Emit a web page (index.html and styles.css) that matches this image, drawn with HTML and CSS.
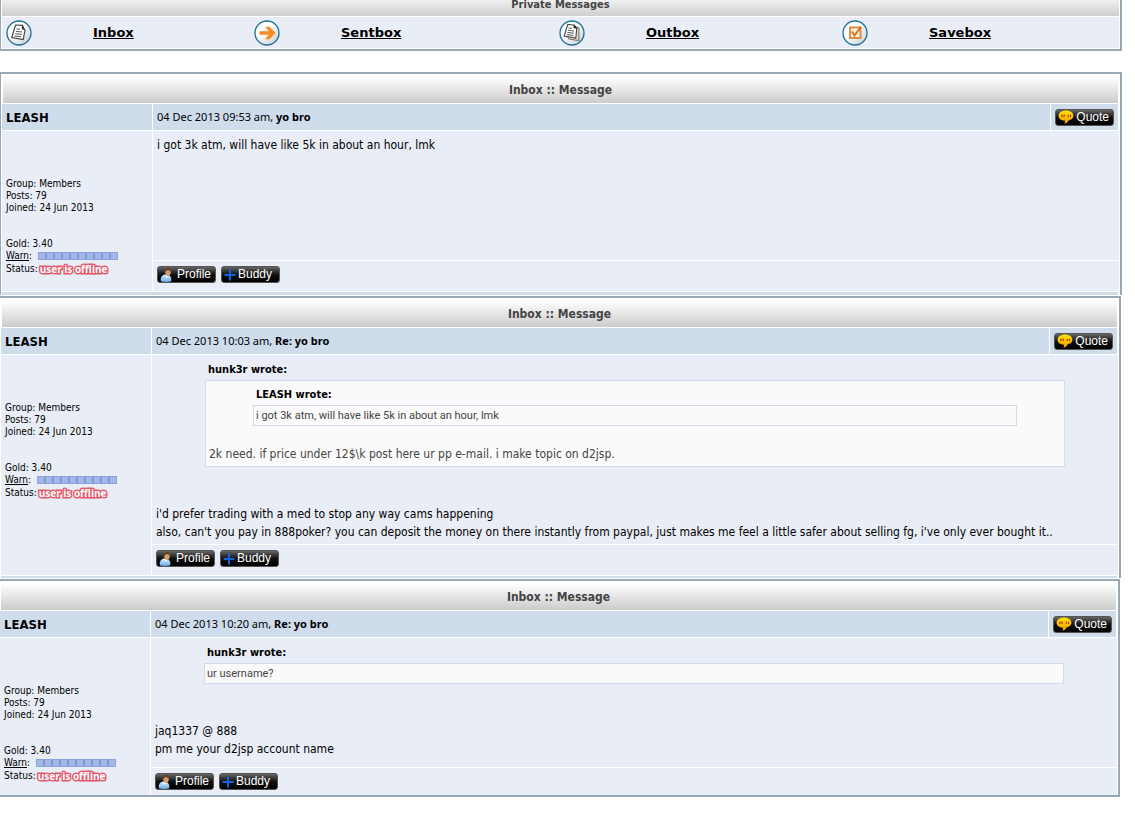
FILE: index.html
```
<!DOCTYPE html>
<html lang="en">
  <head>
    <meta charset="UTF-8" />
    <meta name="viewport" content="width=device-width, initial-scale=1.0" />
    <title>Private Messages</title>
    <link rel="stylesheet" href="styles.css">
  </head>
  <body>
    <!-- Shared icons -->
    <svg class="sprite" aria-hidden="true">
      <defs>
        <linearGradient id="disc" x1="0" y1="0" x2="1" y2="1">
          <stop offset="0.4" stop-color="#ffffff" />
          <stop offset="1" stop-color="#c4c8cc" />
        </linearGradient>
        <linearGradient id="bubble" x1="0" y1="0" x2="0" y2="1">
          <stop offset="0" stop-color="#ffe400" />
          <stop offset="1" stop-color="#f59a00" />
        </linearGradient>
        <linearGradient id="shirt" x1="0" y1="0" x2="0" y2="1">
          <stop offset="0" stop-color="#d4ecff" />
          <stop offset="1" stop-color="#69aee8" />
        </linearGradient>
      </defs>
      <symbol id="icon-inbox" viewBox="0 0 26 26">
        <circle cx="13" cy="13" r="12" fill="url(#disc)" stroke="#1f7196" stroke-width="1.3" />
        <path d="M9.5 5 L16.5 5.3 L18 9 L19 10 L17.2 19.5 L5.8 17.5 Z" fill="#fff" stroke="#444" stroke-width="1.2" />
        <path d="M16 5 L15.8 9.3 L19 9.8 Z" fill="#333" />
        <path d="M10.5 9 L14 9.3 M10 11.4 L16 12 M9.2 13.7 L15.7 14.4 M8.4 16 L15.2 16.8" stroke="#555" stroke-width="1" />
      </symbol>
      <symbol id="icon-sent" viewBox="0 0 26 26">
        <circle cx="13" cy="13" r="12" fill="url(#disc)" stroke="#1f7196" stroke-width="1.3" />
        <path d="M5.5 11.2 H15 L11 6.8 H15.5 L21.5 13 L15.5 19.2 H11 L15 14.8 H5.5 Z" fill="#f78b1f" />
      </symbol>
      <symbol id="icon-outbox" viewBox="0 0 26 26">
        <circle cx="13" cy="13" r="12" fill="url(#disc)" stroke="#1f7196" stroke-width="1.3" />
        <path d="M18 7 L20 8.5 L19.8 20.5 L10 19 L9 17.5" fill="#e4dccb" stroke="#777" stroke-width="1.1" />
        <path d="M8.7 4.5 L15 5 L17.8 8 L16.8 18 L5.2 16 Z" fill="#fff" stroke="#444" stroke-width="1.1" />
        <path d="M14.8 4.6 L14.5 8.3 L18.2 8.6 Z" fill="#222" />
        <path d="M9.5 8 L13 8.4 M9 10.3 L15 11 M8.5 12.5 L14.8 13.2 M8 14.6 L14.5 15.4" stroke="#444" stroke-width="0.9" />
      </symbol>
      <symbol id="icon-save" viewBox="0 0 26 26">
        <circle cx="13" cy="13" r="12" fill="url(#disc)" stroke="#1f7196" stroke-width="1.3" />
        <rect x="8" y="7.5" width="10.5" height="10.5" fill="#fff4e2" stroke="#d98230" stroke-width="1.8" />
        <path d="M10 11.5 L12.5 15.5 L19 6.8" fill="none" stroke="#d5741b" stroke-width="2" />
      </symbol>
      <symbol id="icon-quote" viewBox="0 0 16 14">
        <path d="M8 0.5 C12.5 0.5 15.4 2.8 15.4 5.8 C15.4 8.4 13 10 10.4 10.4 C9.7 12.2 8.4 13.2 6.4 13.8 C7 12.5 7.2 11.5 7 10.8 C3 10.6 0.6 8.8 0.6 5.8 C0.6 2.8 3.5 0.5 8 0.5 Z" fill="url(#bubble)" />
        <path d="M3.8 7 V5.6 L4.6 4.8 M6 7 V5.6 L6.8 4.8 M10.4 4.8 V5.8 L9.8 6.8 M12.6 4.8 V5.8 L12 6.8" fill="none" stroke="#b34a00" stroke-width="1.3" />
      </symbol>
      <symbol id="icon-profile" viewBox="0 0 13 15">
        <path d="M1 14.5 C0 10.5 2 8 5 7.5 L8 8 C10.5 8.8 12 11 11 14.5 C8 15 4 15 1 14.5 Z" fill="url(#shirt)" />
        <path d="M5 8 L6.8 11 L8.5 8 Z" fill="#fff" />
        <ellipse cx="8" cy="4.8" rx="2.8" ry="4.2" fill="#d39c70" />
        <path d="M5 5 C4.5 1.4 7 0 9 0.5 C10.8 1 11.3 3 10.8 5 C9.8 3 7 2.4 5 5 Z" fill="#5f4025" />
      </symbol>
      <symbol id="icon-plus" viewBox="0 0 12 12">
        <path d="M6 0.5 V11.5 M0.5 6 H11.5" stroke="#1462e0" stroke-width="2" />
      </symbol>
    </svg>

    <!-- Folders -->
    <nav class="folders">
      <div class="folders-title"><span>Private Messages</span></div>
      <ul>
        <li><svg><use href="#icon-inbox" /></svg><a href="#inbox">Inbox</a></li>
        <li><svg><use href="#icon-sent" /></svg><a href="#sentbox">Sentbox</a></li>
        <li><svg><use href="#icon-outbox" /></svg><a href="#outbox">Outbox</a></li>
        <li><svg><use href="#icon-save" /></svg><a href="#savebox">Savebox</a></li>
      </ul>
    </nav>

    <!-- Messages -->
    <main>
      <article class="message first">
        <h2>Inbox :: Message</h2>
        <div class="bar">
          <a class="author" href="#leash">LEASH</a>
          <p class="subject">04 Dec 2013 09:53 am, <b>yo bro</b></p>
          <div class="reply">
            <button class="btn"><svg class="bubble"><use href="#icon-quote" /></svg>Quote</button>
          </div>
        </div>
        <div class="content">
          <aside class="member">
            <p>Group: Members<br>Posts: 79<br>Joined: 24 Jun 2013</p>
            <p>Gold: 3.40</p>
            <p class="warn"><span><a href="#warn">Warn</a>:</span> <span class="meter"></span></p>
            <p class="status">Status: <span class="offline">user is offline</span></p>
          </aside>
          <div class="text">
            <p>i got 3k atm, will have like 5k in about an hour, lmk</p>
          </div>
          <div class="actions">
            <button class="btn"><svg class="person"><use href="#icon-profile" /></svg>Profile</button>
            <button class="btn buddy"><svg class="plus"><use href="#icon-plus" /></svg>Buddy</button>
          </div>
        </div>
      </article>

      <article class="message second">
        <h2>Inbox :: Message</h2>
        <div class="bar">
          <a class="author" href="#leash">LEASH</a>
          <p class="subject">04 Dec 2013 10:03 am, <b>Re: yo bro</b></p>
          <div class="reply">
            <button class="btn"><svg class="bubble"><use href="#icon-quote" /></svg>Quote</button>
          </div>
        </div>
        <div class="content">
          <aside class="member">
            <p>Group: Members<br>Posts: 79<br>Joined: 24 Jun 2013</p>
            <p>Gold: 3.40</p>
            <p class="warn"><span><a href="#warn">Warn</a>:</span> <span class="meter"></span></p>
            <p class="status">Status: <span class="offline">user is offline</span></p>
          </aside>
          <div class="text">
            <div class="quote">
              <cite>hunk3r wrote:</cite>
              <blockquote>
                <div class="quote">
                  <cite>LEASH wrote:</cite>
                  <blockquote class="short">i got 3k atm, will have like 5k in about an hour, lmk</blockquote>
                </div>
                <p>2k need. if price under 12$\k post here ur pp e-mail. i make topic on d2jsp.</p>
              </blockquote>
            </div>
            <p>i'd prefer trading with a med to stop any way cams happening<br>also, can't you pay in 888poker? you can deposit the money on there instantly from paypal, just makes me feel a little safer about selling fg, i've only ever bought it..</p>
          </div>
          <div class="actions">
            <button class="btn"><svg class="person"><use href="#icon-profile" /></svg>Profile</button>
            <button class="btn buddy"><svg class="plus"><use href="#icon-plus" /></svg>Buddy</button>
          </div>
        </div>
      </article>

      <article class="message third">
        <h2>Inbox :: Message</h2>
        <div class="bar">
          <a class="author" href="#leash">LEASH</a>
          <p class="subject">04 Dec 2013 10:20 am, <b>Re: yo bro</b></p>
          <div class="reply">
            <button class="btn"><svg class="bubble"><use href="#icon-quote" /></svg>Quote</button>
          </div>
        </div>
        <div class="content">
          <aside class="member">
            <p>Group: Members<br>Posts: 79<br>Joined: 24 Jun 2013</p>
            <p>Gold: 3.40</p>
            <p class="warn"><span><a href="#warn">Warn</a>:</span> <span class="meter"></span></p>
            <p class="status">Status: <span class="offline">user is offline</span></p>
          </aside>
          <div class="text">
            <div class="quote">
              <cite>hunk3r wrote:</cite>
              <blockquote class="short">ur username?</blockquote>
            </div>
            <p>jaq1337 @ 888<br>pm me your d2jsp account name</p>
          </div>
          <div class="actions">
            <button class="btn"><svg class="person"><use href="#icon-profile" /></svg>Profile</button>
            <button class="btn buddy"><svg class="plus"><use href="#icon-plus" /></svg>Buddy</button>
          </div>
        </div>
      </article>
    </main>
  </body>
</html>
```
FILE: styles.css
```
* {
  box-sizing: border-box;
}
body {
  margin: 0;
  background-color: #fff;
  color: #000;
  font-family: "DejaVu Sans Condensed", "DejaVu Sans", Tahoma, sans-serif;
  font-stretch: condensed;
  font-size: 12px;
  line-height: 18px;
}
p,
ul,
h2,
blockquote {
  margin: 0;
  padding: 0;
}
a {
  color: #000;
}
.sprite {
  position: absolute;
  width: 0;
  height: 0;
}

/* Folders */
.folders {
  margin: 0 13px 21px 0;
  padding: 0 1px 1px;
  border: 2px solid #98a9b3;
  border-width: 0 2px 2px 1px;
}
.folders-title {
  display: flex;
  justify-content: center;
  height: 16px;
  margin-bottom: 1px;
  background: linear-gradient(#f0f0f0, #cfcfcf);
  color: #444;
  font-size: 11px;
  font-weight: bold;
  line-height: 9px;
}
.folders ul {
  display: grid;
  grid-template-columns: 248fr 305fr 283fr 281fr;
  background-color: #e9edf5;
  list-style: none;
}
.folders li {
  display: flex;
  align-items: center;
  gap: 61px;
  height: 31px;
  padding-left: 4px;
}
.folders svg {
  width: 26px;
  height: 26px;
}
.folders a {
  font-family: "DejaVu Sans", Verdana, sans-serif;
  font-stretch: normal;
  font-size: 13px;
  font-weight: bold;
}

/* Messages */
.message {
  margin-bottom: 1px;
  padding-right: 1px;
  border-top: 2px solid #98a9b3;
  border-right: 2px solid #98a9b3;
}
.first {
  margin-right: 13px;
  padding-left: 1px;
  border-left: 1px solid #98a9b3;
}
.second {
  margin-right: 14px;
  padding-left: 1px;
}
.third {
  margin-right: 15px;
  border-bottom: 2px solid #98a9b3;
}
.message h2 {
  margin: 0 1px;
  padding-top: 3px;
  background: linear-gradient(#fff 10%, #cbcbcb);
  color: #444;
  font-size: 12px;
  line-height: 26px;
  text-align: center;
}
.bar {
  display: grid;
  grid-template-columns: 150px 1fr 67px;
  gap: 1px;
  margin: 1px 1px 1px 0;
}
.bar > * {
  display: flex;
  align-items: center;
  height: 26px;
  padding: 0 4px;
  background-color: #cfdcec;
}
.bar .author {
  padding-top: 2px;
  font-size: 13px;
  font-weight: bold;
  text-decoration: none;
}
.subject {
  font-family: "Noto Sans", Tahoma, sans-serif;
  font-stretch: normal;
  font-size: 11px;
  white-space: pre-wrap;
}
.content {
  display: grid;
  grid-template-columns: 150px 1fr;
  grid-template-rows: 1fr auto;
  gap: 1px;
}
.content > * {
  background-color: #e9edf5;
}
.member {
  grid-row: span 2;
  padding: 47px 4px 0;
  font-size: 10px;
  line-height: 12px;
}
.member p + p {
  margin-top: 24px;
}
.member .warn,
.member .status {
  display: flex;
  align-items: center;
  gap: 6px;
  margin-top: 0;
}
.member .status {
  gap: 2px;
  height: 14px;
}
.meter {
  width: 80px;
  height: 8px;
  border: 1px solid #8ba3dc;
  background: repeating-linear-gradient(90deg, #a5b7e4 0 6px, #7e98d6 6px 8px);
}
.offline {
  color: #fff;
  font-family: "Open Sans", sans-serif;
  font-stretch: normal;
  font-weight: bold;
  paint-order: stroke fill;
  -webkit-text-stroke: 3px #e4596c;
}
.text {
  min-height: 129px;
  padding: 5px 4px 3px;
}
.actions {
  display: flex;
  gap: 5px;
  min-height: 30px;
  padding: 5px 4px;
}
.third .actions {
  min-height: 27px;
}
.first::after,
.second::after {
  content: "";
  display: block;
  height: 3px;
  margin: 1px 1px 0 0;
  background-color: #cfdcec;
}
.second::after {
  height: 2px;
}

/* Quotes */
.quote {
  margin: 0 49px;
}
.quote + p {
  margin-top: 38px;
}
cite {
  display: block;
  padding-left: 3px;
  font-size: 11px;
  font-style: normal;
  font-weight: bold;
  line-height: 20px;
}
blockquote {
  padding: 4px 3px 3px;
  border: 1px solid #cfdcec;
  background-color: #fafafa;
  color: #444;
}
blockquote .quote {
  margin: 0 44px;
}
blockquote cite {
  color: #000;
}
blockquote .quote + p {
  margin-top: 19px;
}
blockquote.short {
  padding: 0 2px;
  font-family: Roboto, Tahoma, sans-serif;
  font-stretch: normal;
  font-size: 11px;
  line-height: 19px;
}

/* Buttons */
.btn {
  display: flex;
  justify-content: space-between;
  align-items: center;
  width: 59px;
  height: 17px;
  padding: 0 4px 0 2px;
  border: 1px solid #555;
  border-radius: 3px;
  background: linear-gradient(#666, #111 50%, #000);
  color: #fff;
  font-family: "Liberation Sans", Arial, sans-serif;
  font-size: 12px;
  line-height: 15px;
  cursor: pointer;
}
.btn:hover {
  border-color: #999;
}
.btn svg {
  flex: none;
}
.buddy {
  padding-right: 7px;
}
.bubble {
  width: 16px;
  height: 14px;
}
.person {
  width: 13px;
  height: 15px;
}
.plus {
  width: 12px;
  height: 12px;
}
```
